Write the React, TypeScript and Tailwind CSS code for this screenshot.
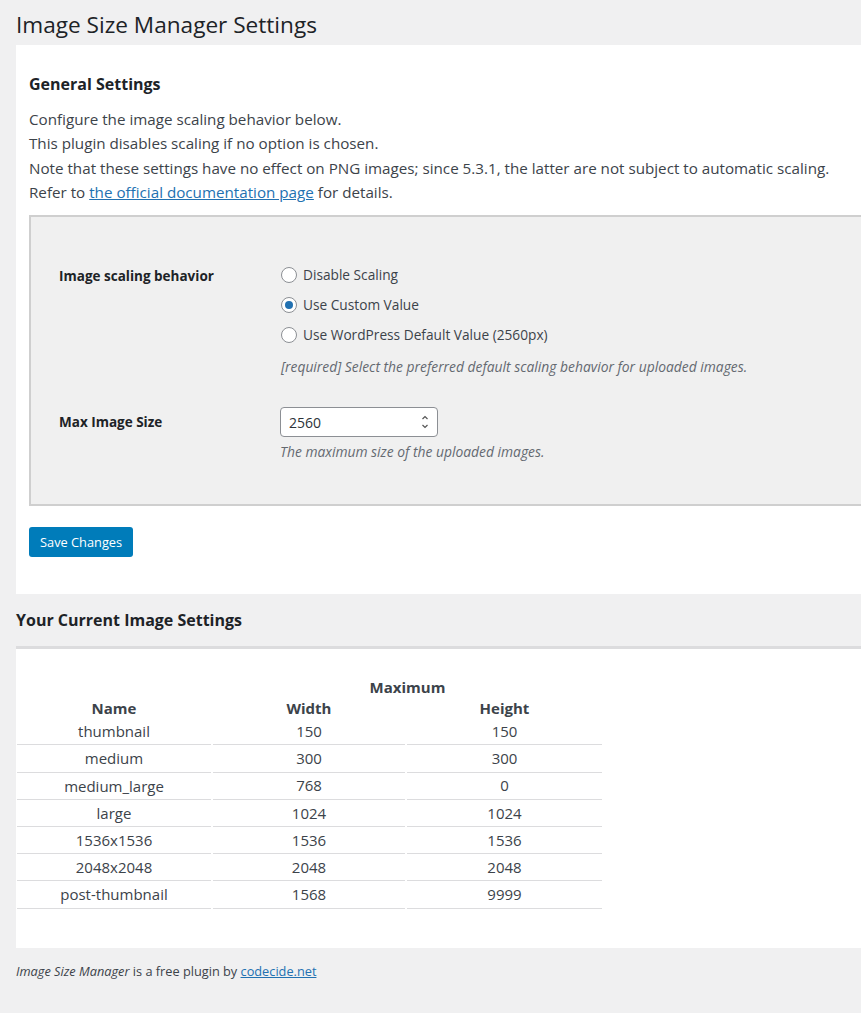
import React from "react";

const font = { fontFamily: '"Open Sans", "Noto Sans", sans-serif' };

const rows: [string, number, number][] = [
  ["thumbnail", 150, 150],
  ["medium", 300, 300],
  ["medium_large", 768, 0],
  ["large", 1024, 1024],
  ["1536x1536", 1536, 1536],
  ["2048x2048", 2048, 2048],
  ["post-thumbnail", 1568, 9999],
];

function Radio({ checked, label }: { checked?: boolean; label: string }) {
  return (
    <label className="flex h-[30px] items-center gap-[6px]">
      <span className="flex h-4 w-4 items-center justify-center rounded-full border border-[#8c8f94] bg-white">
        {checked ? <span className="h-2 w-2 rounded-full bg-[#2271b1]" /> : null}
      </span>
      <span className="text-[13.7px]">{label}</span>
    </label>
  );
}

export default function App() {
  return (
    <div className="min-h-[1013px] w-[861px] overflow-hidden bg-[#f0f0f1] text-[14px] text-[#3c434a]" style={font}>
      <h1 className="px-4 pt-[11px] pb-[6px] text-[22.6px] leading-[28px] text-[#1d2327]">Image Size Manager Settings</h1>

      <div className="ml-4 w-[900px] bg-white pt-[26px] pb-[37px] pl-[13px]">
        <h2 className="text-[16px] font-bold leading-[26px] text-[#1d2327]">General Settings</h2>
        <div className="mt-[10px] text-[15.2px] leading-[24.3px]">
          <p>Configure the image scaling behavior below.</p>
          <p>This plugin disables scaling if no option is chosen.</p>
          <p>Note that these settings have no effect on PNG images; since 5.3.1, the latter are not subject to automatic scaling.</p>
          <p>
            Refer to{" "}
            <a href="#" className="text-[#2271b1] underline">
              the official documentation page
            </a>{" "}
            for details.
          </p>
        </div>

        <div className="mt-[11px] h-[291px] border-2 border-r-0 border-[#cfcfcf] bg-[#f0f0f0] pt-[43px] pl-[28px]">
          <div className="flex">
            <div className="w-[222px] pt-[6px] text-[13.5px] font-bold text-[#1d2327]">Image scaling behavior</div>
            <div>
              <Radio label="Disable Scaling" />
              <Radio checked label="Use Custom Value" />
              <Radio label="Use WordPress Default Value (2560px)" />
              <p className="mt-[5px] text-[13.85px] italic leading-[24px] text-[#646970]">
                [required] Select the preferred default scaling behavior for uploaded images.
              </p>
            </div>
          </div>
          <div className="mt-[28px] flex">
            <div className="w-[221px] pt-[5px] text-[13.5px] font-bold text-[#1d2327]">Max Image Size</div>
            <div>
              <div className="flex h-[30px] w-[158px] items-center justify-between rounded-[4px] border border-[#8c8f94] bg-white pr-[8px] pl-[8px] text-[#2c3338]">
                <span>2560</span>
                <svg width="8" height="16" viewBox="0 0 8 16" fill="none" stroke="#555" strokeWidth="1.2">
                  <path d="M1.5 5 L4 2.5 L6.5 5" />
                  <path d="M1.5 11 L4 13.5 L6.5 11" />
                </svg>
              </div>
              <p className="mt-[3px] text-[13.85px] italic leading-[24px] text-[#646970]">The maximum size of the uploaded images.</p>
            </div>
          </div>
        </div>

        <button className="mt-[21px] h-[30px] rounded-[3px] bg-[#007cba] px-[11px] text-[12.8px] text-white">Save Changes</button>
      </div>

      <h2 className="px-4 pt-[15px] pb-[15px] text-[16px] font-bold leading-[22px] text-[#1d2327]">Your Current Image Settings</h2>

      <div className="ml-4 w-[900px] border-t-[3px] border-[#dcdcde] bg-white pt-[27px] pb-[39px]">
        <table className="-ml-px border-separate border-spacing-x-[2px] border-spacing-y-0 text-center text-[15px]">
          <thead className="leading-[20px] text-[#3c434a]">
            <tr>
              <th className="w-[194px]" />
              <th colSpan={2} className="h-[22px] font-bold">
                Maximum
              </th>
            </tr>
            <tr>
              <th className="h-[20px] font-bold">Name</th>
              <th className="w-[192px] font-bold">Width</th>
              <th className="w-[195px] font-bold">Height</th>
            </tr>
          </thead>
          <tbody>
            {rows.map(([name, w, h]) => (
              <tr key={name}>
                <td className="h-[27.2px] border-b border-[#dcdcde] leading-[24px]">{name}</td>
                <td className="border-b border-[#dcdcde]">{w}</td>
                <td className="border-b border-[#dcdcde]">{h}</td>
              </tr>
            ))}
          </tbody>
        </table>
      </div>

      <p className="px-4 pt-[14px] text-[12.75px] text-[#3c434a]">
        <em>Image Size Manager</em> is a free plugin by{" "}
        <a href="#" className="text-[#2271b1] underline">
          codecide.net
        </a>
      </p>
    </div>
  );
}
